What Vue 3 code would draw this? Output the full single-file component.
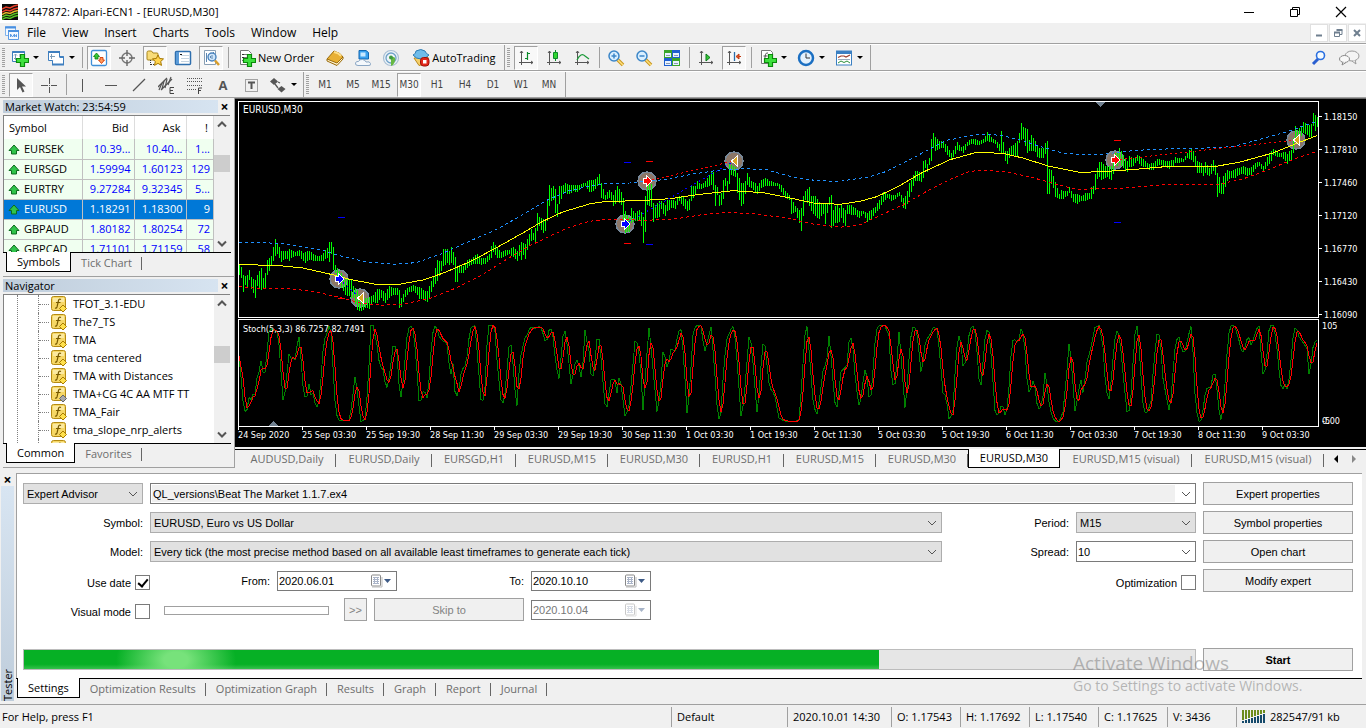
<template>
  <div class="terminal">
    <header class="title-bar">
      <svg class="app-logo" viewBox="0 0 16 16">
        <rect width="16" height="16" fill="#0a0a0a"/>
        <path d="M0 5l4-2 4 1 4-2 4-1M0 8l4-2 4 1 4-2 4-1" stroke="#e8402a" fill="none" stroke-width="1.4"/>
        <path d="M0 10.500l4-2 4 1 4-2 4-1" stroke="#e8b52a" fill="none" stroke-width="1.4"/>
        <path d="M0 13l4-2 4 1 4-2 4-1M0 15.500l4-2 4 1 4-2 4-1" stroke="#58c322" fill="none" stroke-width="1.4"/>
      </svg>
      <span class="title-text">1447872: Alpari-ECN1 - [EURUSD,M30]</span>
      <div class="window-buttons">
        <button v-for="name in ['minimize', 'restore', 'close']" :key="name" :aria-label="name">
          <svg viewBox="0 0 12 12" v-html="icons[name]"></svg>
        </button>
      </div>
    </header>

    <nav class="menu-bar">
      <svg class="menu-icon" viewBox="0 0 16 16" v-html="icons.mdi"></svg>
      <button v-for="item in menus" :key="item">{{ item }}</button>
      <div class="mdi-buttons">
        <button v-for="name in ['mdiMin', 'mdiRestore', 'mdiClose']" :key="name" :aria-label="name">
          <svg viewBox="0 0 12 12" v-html="icons[name]"></svg>
        </button>
      </div>
    </nav>

    <div class="toolbar">
      <div class="tool-group">
        <i class="grip"></i>
        <template v-for="(tool, index) in mainTools" :key="index">
          <i v-if="tool.sep" class="sep"></i>
          <button v-else class="tool" :class="{pressed: tool.on, drop: tool.drop, wide: tool.text}" :aria-label="tool.icon">
            <svg viewBox="0 0 18 18" v-html="icons[tool.icon]"></svg>
            <span v-if="tool.text">{{ tool.text }}</span>
            <i v-if="tool.drop" class="caret"></i>
          </button>
        </template>
      </div>
      <div class="tool-group charts">
        <i class="grip"></i>
        <template v-for="(tool, index) in chartTools" :key="index">
          <i v-if="tool.sep" class="sep"></i>
          <button v-else class="tool" :class="{pressed: tool.on, drop: tool.drop}" :aria-label="tool.icon">
            <svg viewBox="0 0 18 18" v-html="icons[tool.icon]"></svg>
            <i v-if="tool.drop" class="caret"></i>
          </button>
        </template>
      </div>
      <div class="tool-right">
        <button class="tool" aria-label="search"><svg viewBox="0 0 18 18" v-html="icons.search"></svg></button>
        <button class="tool chat" aria-label="chat"><svg viewBox="0 0 22 18" v-html="icons.chat"></svg></button>
      </div>
    </div>

    <div class="toolbar">
      <div class="tool-group">
        <i class="grip"></i>
        <template v-for="(tool, index) in drawTools" :key="index">
          <i v-if="tool.sep" class="sep"></i>
          <button v-else class="tool" :class="{pressed: tool.on, drop: tool.drop}" :aria-label="tool.icon">
            <span v-if="tool.letter" class="letter">{{ tool.letter }}</span>
            <svg v-else viewBox="0 0 18 18" v-html="icons[tool.icon]"></svg>
            <i v-if="tool.drop" class="caret"></i>
          </button>
        </template>
      </div>
      <div class="tool-group">
        <i class="grip"></i>
        <button v-for="tf in timeframes" :key="tf" class="tool timeframe" :class="{pressed: tf === 'M30'}">{{ tf }}</button>
      </div>
    </div>

    <main class="workspace">
      <aside class="side">
        <section class="dock">
          <div class="dock-title"><span>Market Watch: 23:54:59</span><button aria-label="Close">×</button></div>
          <div class="dock-body quotes">
            <table>
              <thead>
                <tr><th class="symbol">Symbol</th><th class="bid">Bid</th><th class="ask">Ask</th><th class="spread">!</th></tr>
              </thead>
              <tbody>
                <tr v-for="row in quotes" :key="row[0]" :class="{selected: row[0] === 'EURUSD'}">
                  <td class="symbol"><svg viewBox="0 0 12 12" v-html="icons.up"></svg>{{ row[0] }}</td>
                  <td>{{ row[1] }}</td>
                  <td>{{ row[2] }}</td>
                  <td>{{ row[3] }}</td>
                </tr>
              </tbody>
            </table>
            <div class="scroll">
              <svg viewBox="0 0 16 16"><path d="M4 10l4-4 4 4" /></svg>
              <i class="thumb watch-thumb"></i>
              <svg viewBox="0 0 16 16"><path d="M4 6l4 4 4-4" /></svg>
            </div>
          </div>
          <div class="dock-tabs"><button class="active">Symbols</button><button>Tick Chart</button></div>
        </section>

        <section class="dock">
          <div class="dock-title"><span>Navigator</span><button aria-label="Close">×</button></div>
          <div class="dock-body navigator">
            <ul>
              <li v-for="name in indicators" :key="name">
                <svg viewBox="0 0 16 16" :class="{gray: name.startsWith('TMA+')}" v-html="icons.indicator"></svg>{{ name }}
              </li>
            </ul>
            <div class="scroll">
              <svg viewBox="0 0 16 16"><path d="M4 10l4-4 4 4" /></svg>
              <i class="thumb nav-thumb"></i>
              <svg viewBox="0 0 16 16"><path d="M4 6l4 4 4-4" /></svg>
            </div>
          </div>
          <div class="dock-tabs"><button class="active">Common</button><button>Favorites</button></div>
        </section>
      </aside>

      <section class="chart-area">
        <div class="chart">
          <div class="pane-row">
            <div class="pane price-pane">
              <span class="pane-title">EURUSD,M30</span>
              <svg viewBox="3 4 1079 215" preserveAspectRatio="none">
                <path d="M860 4h9l-4.500 5z" fill="#708090"/>
                <g v-for="(m, i) in markers" :key="'c' + i">
                  <circle :cx="m.x" :cy="m.y" r="9" fill="#8c7768" stroke="#778899" stroke-width="1.500"/>
                </g>
                <path :d="barPath" class="bars"/>
                <path :d="upperBand" class="line blue dashed"/>
                <path :d="lowerBand" class="line red dashed"/>
                <path :d="middleBand" class="line yellow"/>
                <path d="M103 181L124 200M389 126L498 63" class="line trade-blue dotted"/>
                <path d="M411 83L498 63M879 62L1060 42" class="line red dotted"/>
                <path d="M102 119.500h7M388 64.500h7M410 146.500h7M878 124.500h7" class="line trade-blue"/>
                <path d="M102 200.500h7M410 63.500h7M388 145.500h7M878 42.500h7" class="line red"/>
                <g v-for="(m, i) in markers" :key="'m' + i" :transform="`translate(${m.x} ${m.y})`" class="marker">
                  <path v-if="m.color" d="M-3-2H0V-4L4 0 0 4V2H-3z" :fill="m.color"/>
                  <path v-else d="M3-4L-2 0 3 4z" fill="#daa520"/>
                </g>
              </svg>
            </div>
            <div class="axis price-axis"><span v-for="price in prices" :key="price">{{ price }}</span></div>
          </div>
          <div class="pane-row">
            <div class="pane stoch-pane">
              <span class="pane-title small">Stoch(5,3,3) 86.7257 82.7491</span>
              <svg viewBox="3 4 1079 106" preserveAspectRatio="none">
                <path d="M33 110h9l-4.500-5z" fill="#708090"/>
                <path :d="mainLine" class="line green"/>
                <path :d="signalLine" class="line red"/>
              </svg>
            </div>
            <div class="axis stoch-axis"><span>105</span><span class="levels"><b>0.00</b><b>-5</b></span></div>
          </div>
          <div class="time-axis"><span v-for="date in dates" :key="date">{{ date }}</span></div>
        </div>
        <nav class="chart-tabs">
          <button v-for="(tab, i) in chartTabs" :key="i" :class="{active: i === 8}" :style="{width: tab.width + 'px'}">{{ tab.name }}</button>
          <span class="tab-arrows"><i class="left"></i><i class="right"></i></span>
        </nav>
      </section>
    </main>

    <section class="tester">
      <div class="tester-strip"><button aria-label="Close">×</button><span>Tester</span></div>
      <div class="tester-main">
        <form class="settings" @submit.prevent>
          <div class="fields">
            <div class="row">
              <span class="combo w120"><select aria-label="Program type"><option>Expert Advisor</option></select><svg viewBox="0 0 10 6"><path d="M1 1l4 4 4-4"/></svg></span>
              <span class="combo white grow"><input v-model="expert" class="expert-name" aria-label="Expert"><svg viewBox="0 0 10 6"><path d="M1 1l4 4 4-4"/></svg></span>
            </div>
            <div class="row">
              <label class="w120" for="symbol">Symbol:</label>
              <span class="combo grow"><select id="symbol"><option>EURUSD, Euro vs US Dollar</option></select><svg viewBox="0 0 10 6"><path d="M1 1l4 4 4-4"/></svg></span>
              <label class="w120" for="period">Period:</label>
              <span class="combo w120"><select id="period"><option>M15</option></select><svg viewBox="0 0 10 6"><path d="M1 1l4 4 4-4"/></svg></span>
            </div>
            <div class="row">
              <label class="w120" for="model">Model:</label>
              <span class="combo grow"><select id="model"><option>Every tick (the most precise method based on all available least timeframes to generate each tick)</option></select><svg viewBox="0 0 10 6"><path d="M1 1l4 4 4-4"/></svg></span>
              <label class="w120" for="spread">Spread:</label>
              <span class="combo white w120"><input id="spread" v-model="spread"><svg viewBox="0 0 10 6"><path d="M1 1l4 4 4-4"/></svg></span>
            </div>
            <div class="row">
              <label class="check lead">Use date<input v-model="useDate" type="checkbox"></label>
              <label class="from" for="from">From:</label>
              <span class="date"><input id="from" v-model="from"><svg viewBox="0 0 22 14" v-html="icons.calendar"></svg></span>
              <label class="w120" for="to">To:</label>
              <span class="date"><input id="to" v-model="to"><svg viewBox="0 0 22 14" v-html="icons.calendar"></svg></span>
              <label class="check last">Optimization<input v-model="optimization" type="checkbox"></label>
            </div>
            <div class="row">
              <label class="check lead">Visual mode<input v-model="visual" type="checkbox"></label>
              <input class="speed" type="range" aria-label="Speed" disabled>
              <button class="push next" disabled>&gt;&gt;</button>
              <button class="push skip" disabled>Skip to</button>
              <span class="date off"><input v-model="skipTo" aria-label="Skip to date" disabled><svg viewBox="0 0 22 14" v-html="icons.calendar"></svg></span>
            </div>
            <div class="progress"><div class="progress-fill" :style="{width: progress + '%'}"></div></div>
          </div>
          <div class="actions">
            <button class="push">Expert properties</button>
            <button class="push">Symbol properties</button>
            <button class="push">Open chart</button>
            <button class="push">Modify expert</button>
            <button class="push start">Start</button>
          </div>
        </form>
        <nav class="tester-tabs">
          <button v-for="tab in testerTabs" :key="tab" :class="{active: tab === 'Settings'}">{{ tab }}</button>
        </nav>
      </div>
      <div class="watermark"><p>Activate Windows</p><p>Go to Settings to activate Windows.</p></div>
    </section>

    <footer class="status-bar">
      <span class="help">For Help, press F1</span>
      <span class="profile">Default</span>
      <span class="time">2020.10.01 14:30</span>
      <span>O: 1.17543</span>
      <span>H: 1.17692</span>
      <span>L: 1.17540</span>
      <span>C: 1.17625</span>
      <span>V: 3436</span>
      <span class="traffic"><svg viewBox="0 0 24 13" v-html="icons.traffic"></svg>282547/91 kb</span>
    </footer>
  </div>
</template>

<script setup>
import {ref} from 'vue';

const expert = ref('QL_versions\\Beat The Market 1.1.7.ex4');
const spread = ref('10');
const useDate = ref(true);
const visual = ref(false);
const optimization = ref(false);
const from = ref('2020.06.01');
const to = ref('2020.10.10');
const skipTo = ref('2020.10.04');
const progress = 73;

const menus = ['File', 'View', 'Insert', 'Charts', 'Tools', 'Window', 'Help'];

const mainTools = [
  {icon: 'newChart', drop: true},
  {icon: 'profiles', drop: true},
  {sep: true},
  {icon: 'watch', on: true},
  {icon: 'target'},
  {icon: 'folder', on: true},
  {icon: 'list'},
  {icon: 'testerIcon', on: true},
  {sep: true},
  {icon: 'order', text: 'New Order'},
  {icon: 'book'},
  {icon: 'server'},
  {icon: 'signal'},
  {icon: 'auto', text: 'AutoTrading'}
];

const chartTools = [
  {icon: 'barChart', on: true},
  {icon: 'candleChart'},
  {icon: 'lineChart'},
  {sep: true},
  {icon: 'zoomIn'},
  {icon: 'zoomOut'},
  {icon: 'tile'},
  {sep: true},
  {icon: 'autoScroll'},
  {icon: 'shift', on: true},
  {sep: true},
  {icon: 'addIndicator', drop: true},
  {icon: 'clock', drop: true},
  {icon: 'template', drop: true}
];

const drawTools = [
  {icon: 'pointer', on: true},
  {icon: 'cross'},
  {sep: true},
  {icon: 'vline'},
  {icon: 'hline'},
  {icon: 'trend'},
  {icon: 'channel'},
  {icon: 'fibo'},
  {icon: 'text', letter: 'A'},
  {icon: 'textLabel'},
  {icon: 'arrows', drop: true}
];

const timeframes = ['M1', 'M5', 'M15', 'M30', 'H1', 'H4', 'D1', 'W1', 'MN'];

const quotes = [
  ['EURSEK', '10.39...', '10.40...', '1...'],
  ['EURSGD', '1.59994', '1.60123', '129'],
  ['EURTRY', '9.27284', '9.32345', '5...'],
  ['EURUSD', '1.18291', '1.18300', '9'],
  ['GBPAUD', '1.80182', '1.80254', '72'],
  ['GBPCAD', '1.71101', '1.71159', '58']
];

const indicators = [
  'TFOT_3.1-EDU', 'The7_TS', 'TMA', 'tma centered', 'TMA with Distances',
  'TMA+CG 4C AA MTF TT', 'TMA_Fair', 'tma_slope_nrp_alerts', ''
];

const prices = ['1.18150', '1.17810', '1.17460', '1.17120', '1.16770', '1.16430', '1.16090'];

const dates = [
  '24 Sep 2020', '25 Sep 03:30', '25 Sep 19:30', '28 Sep 11:30', '29 Sep 03:30', '29 Sep 19:30',
  '30 Sep 11:30', '1 Oct 03:30', '1 Oct 19:30', '2 Oct 11:30', '5 Oct 03:30', '5 Oct 19:30',
  '6 Oct 11:30', '7 Oct 03:30', '7 Oct 19:30', '8 Oct 11:30', '9 Oct 03:30'
];

const chartTabs = [
  {name: 'AUDUSD,Daily', width: 98},
  {name: 'EURUSD,Daily', width: 96},
  {name: 'EURSGD,H1', width: 84},
  {name: 'EURUSD,M15', width: 92},
  {name: 'EURUSD,M30', width: 92},
  {name: 'EURUSD,H1', width: 84},
  {name: 'EURUSD,M15', width: 92},
  {name: 'EURUSD,M30', width: 92},
  {name: 'EURUSD,M30', width: 92},
  {name: 'EURUSD,M15 (visual)', width: 132},
  {name: 'EURUSD,M15 (visual)', width: 132}
];

const testerTabs = ['Settings', 'Optimization Results', 'Optimization Graph', 'Results', 'Graph', 'Report', 'Journal'];

// chart data is kept in segments: x offset, units per pixel, flat list of samples
const barSegments = [
  [0, 3, [
    10,500,530, 16,505,540, 22,530,582, 28,535,560, 34,530,570, 40,516,545, 46,538,572, 58,545,600, 64,530,565, 76,510,575, 82,540,570, 88,525,572, 94,485,532, 106,475,505,
    118,423,475, 124,435,468, 136,460,492, 142,458,485, 154,460,482, 160,452,488, 166,455,480, 178,462,475, 190,455,475, 202,465,490, 208,462,495, 214,458,488,
    226,462,485, 238,472,490, 250,475,490, 262,465,488, 274,450,480, 280,432,492, 286,430,465, 292,445,515, 298,500,525, 304,510,545, 316,525,570, 328,540,590,
    340,545,595, 346,545,600, 352,565,600, 364,575,635, 376,600,640, 388,600,630, 400,598,632, 412,590,612, 424,573,615, 436,575,600, 448,585,615,
    460,564,600, 472,570,590, 484,570,590, 490,575,630, 496,600,628, 508,575,598, 520,568,582, 532,560,580, 544,568,592, 550,568,602, 556,570,602,
    568,580,608, 574,580,612, 580,565,600, 592,535,568, 604,485,548, 616,490,520, 622,453,505, 634,453,495, 640,460,500, 646,445,495, 652,460,500, 658,475,553,
    664,505,552, 670,500,525, 682,505,525, 694,485,510, 706,482,500, 718,470,498, 724,468,498, 736,480,500, 748,480,498, 760,470,485, 766,445,482,
    772,432,462, 784,450,480, 796,462,480, 808,455,475, 820,455,468, 832,448,478, 844,460,488, 850,440,475, 856,432,485, 862,435,470, 868,438,485, 874,425,455,
    886,392,430, 892,405,425, 898,390,440, 904,345,400, 910,358,385, 922,362,405, 928,365,400, 934,308,370, 940,260,325, 946,270,308, 952,265,305, 958,270,345,
    964,320,358, 970,265,320, 982,262,288, 988,255,285, 1000,262,288, 1012,260,280, 1024,262,282, 1036,258,270, 1048,255,265, 1060,246,282, 1072,246,280,
    1084,238,265, 1090,228,260, 1096,255,300, 1108,290,305, 1120,275,300
  ]],
  [374, 3, [
    4,282,305, 10,290,325, 22,265,312, 34,280,320, 40,300,365, 46,340,405, 58,360,402, 64,330,375, 76,345,370, 88,335,370, 94,340,382, 100,360,435,
    106,295,405, 112,265,320, 118,240,325, 124,255,325, 130,315,372, 136,320,360, 148,310,358, 154,310,332, 160,315,348, 166,320,355, 172,305,340, 184,305,330, 196,308,332,
    208,295,310, 220,298,325, 232,310,338, 238,305,338, 244,262,310, 256,265,288, 262,250,272, 274,258,272, 286,250,268, 298,230,265, 304,220,260, 310,220,275, 316,262,325,
    322,265,290, 328,290,325, 334,285,320, 340,245,305, 346,240,262, 352,250,280, 358,198,260, 364,200,230, 376,205,235, 382,225,285, 394,255,325, 400,255,320, 406,250,290, 412,225,262, 424,250,270,
    436,255,282, 442,265,288, 454,245,270, 466,240,265, 478,248,265, 490,252,265, 502,255,265, 514,260,282, 526,280,298, 538,290,305, 544,300,348,
    556,325,342, 568,335,375, 574,330,402, 580,295,355, 586,280,305, 598,266,325, 604,295,340, 616,295,355, 628,312,362, 640,318,348, 646,315,380,
    652,320,345, 658,298,320, 664,290,390, 670,335,385, 676,325,375, 682,318,375, 688,330,372, 694,318,358, 700,330,375, 706,335,385, 712,322,348, 724,322,350, 736,330,352, 748,340,360, 760,340,348,
    772,345,372, 784,335,362, 796,328,345, 808,305,332, 820,283,312, 832,288,300, 844,290,308, 856,290,302, 868,282,292, 880,300,330, 886,295,332,
    892,280,318, 898,255,298, 904,245,282, 916,218,250, 928,222,250, 934,228,253, 940,188,240, 946,186,210, 952,198,222, 958,183,202, 964,124,190,
    970,105,150, 976,118,160, 988,130,152, 1000,130,150, 1012,145,172, 1024,165,182, 1036,145,170, 1042,132,155, 1054,148,160, 1060,145,165, 1072,132,145,
    1084,122,138, 1096,122,140, 1108,130,140, 1120,124,135
  ]],
  [750, 3, [
    4,102,130, 16,118,132, 28,125,138, 40,138,160, 46,97,165, 52,132,168, 58,160,190, 64,158,200, 70,150,180, 82,140,170, 94,130,178, 100,105,135,
    106,75,125, 112,88,122, 124,92,165, 130,125,158, 136,112,158, 148,130,160, 154,145,178, 160,150,180, 172,152,180, 178,135,165, 184,126,288, 190,212,288,
    196,214,258, 202,235,268, 208,250,298, 220,288,302, 226,275,304, 232,278,302, 244,280,295, 250,268,285, 262,288,312, 274,288,318, 286,295,308, 298,285,308, 310,285,302, 316,268,302, 322,265,288,
    328,228,278, 334,210,242, 340,192,238, 346,192,245, 358,205,240, 364,205,238, 376,205,245, 382,188,230, 388,165,195, 394,165,205, 400,150,195,
    412,170,210, 424,190,222, 430,175,208, 442,180,205, 454,172,188, 466,178,205, 478,190,208, 490,198,215, 502,195,215, 514,182,205, 526,185,200,
    538,188,205, 550,188,212, 562,185,205, 568,178,195, 580,180,195, 592,182,192, 604,165,180, 616,150,185, 622,160,190, 634,190,225, 646,195,225,
    652,205,235, 658,192,225, 670,210,235, 682,185,220, 688,200,230, 694,225,296, 700,235,285, 706,255,288, 712,235,290, 724,215,248, 736,220,240,
    748,212,240, 760,210,230, 772,205,228, 784,210,235, 796,208,230, 808,195,212, 820,192,205, 832,205,222, 844,178,205, 856,160,190, 862,152,172,
    874,162,178, 886,165,178, 898,162,190, 904,168,198, 910,160,190, 916,158,190, 922,120,165, 928,85,130, 934,95,130, 946,85,115, 952,72,105,
    964,80,112, 976,80,120, 982,45,85, 988,50,98, 994,58,88
  ]]
];

const middle = [
  [0, 3, [10,500, 120,502, 200,510, 290,530, 340,544, 415,558, 495,558, 560,546, 620,526, 700,492, 780,450, 860,405, 920,370, 980,342, 1060,318, 1110,310]],
  [374, 3, [0,310, 90,308, 180,302, 260,290, 370,278, 460,284, 540,300, 610,315, 690,319, 750,310, 800,296, 860,268, 940,222, 1020,185, 1100,163]],
  [750, 3, [0,163, 60,168, 110,180, 190,205, 280,223, 350,221, 450,214, 550,205, 690,205, 760,193, 860,165, 930,137, 992,113]]
];

const upper = [
  [0, 3, [10,433, 60,433, 140,437, 260,457, 310,473, 390,491, 470,499, 540,494, 620,466, 700,430, 780,395, 860,350, 930,308, 1000,278, 1080,260, 1115,257]],
  [374, 3, [0,256, 60,255, 160,245, 250,228, 330,216, 400,212, 470,215, 540,235, 620,248, 690,250, 780,236, 830,220, 900,185, 970,147, 1010,127, 1090,112]],
  [750, 3, [0,108, 50,113, 110,128, 160,145, 230,165, 310,171, 360,168, 420,160, 500,154, 640,151, 740,146, 800,130, 900,102, 992,70]]
];

const lower = [
  [0, 3, [10,566, 60,571, 160,572, 230,580, 310,598, 380,617, 440,622, 500,618, 580,602, 660,570, 740,530, 810,485, 880,444, 940,415, 1000,388, 1060,370, 1115,364]],
  [374, 3, [0,364, 110,367, 200,362, 270,351, 350,343, 430,347, 530,360, 610,378, 690,388, 750,380, 800,357, 880,320, 950,280, 1030,240, 1080,220, 1120,217]],
  [750, 3, [0,217, 60,222, 130,236, 200,256, 270,274, 400,271, 470,266, 550,259, 700,259, 770,243, 840,218, 900,193, 950,174, 992,160]]
];

const stochSegments = [
  [0, 2.8, [
    9,120, 22,286, 30,286, 38,235, 43,255, 51,220, 54,240, 62,150, 66,180, 72,112, 78,205, 92,50, 98,38, 118,50, 133,272, 150,98, 156,140, 162,118, 167,140, 174,50,
    178,70, 190,245, 200,240, 206,190, 212,260, 217,220, 222,270, 228,272, 235,245, 240,150, 246,75, 254,55, 261,28, 266,50, 278,270, 285,312, 318,314, 326,250, 334,175,
    342,250, 350,317, 362,308, 370,200, 378,28, 386,28, 392,85, 397,88, 402,155, 410,150, 415,190, 424,218, 432,160, 441,78, 448,98, 452,120, 458,235, 462,243, 468,195,
    480,50, 487,28, 495,35, 504,120, 514,280, 522,225, 528,235, 532,215, 536,260, 545,120, 553,35, 560,28, 570,65, 580,75, 590,78, 596,140, 602,175, 608,140, 614,240,
    622,238, 630,175, 638,150, 644,150, 652,70, 658,35, 670,28, 676,120, 687,265, 696,240, 704,60, 708,28, 724,28, 732,150, 744,272, 752,245, 765,85, 772,90, 780,210,
    788,280, 794,130, 802,105, 806,70, 814,60, 824,32, 838,38, 852,28, 862,60, 868,85, 878,35, 886,45, 896,150, 905,190, 914,75, 919,32, 926,75, 936,180, 940,230,
    945,155, 954,130, 962,155, 967,190, 973,125, 978,28, 984,90, 990,110, 996,205, 1004,150, 1012,55, 1018,75, 1030,230, 1036,292, 1044,235, 1052,178, 1058,200,
    1062,190, 1068,242, 1074,165, 1082,240, 1090,305, 1100,270, 1108,190, 1118,65, 1126,90, 1134,170, 1140,290, 1148,150, 1157,28, 1165,130, 1180,300, 1190,200,
    1197,85, 1202,130, 1208,160, 1218,100, 1230,105, 1236,60, 1245,30, 1254,130, 1264,312, 1272,190, 1280,50, 1288,28, 1302,30, 1312,110, 1320,75, 1330,32, 1338,130,
    1350,317, 1358,290, 1366,150, 1374,70, 1388,35, 1394,30, 1402,120, 1415,315, 1424,230, 1438,40, 1446,120, 1460,305, 1470,150, 1478,55, 1486,140, 1494,215,
    1508,235, 1520,305, 1534,315, 1564,317
  ]],
  [560, 2.75, [
    9,310, 16,200, 24,60, 30,28, 38,130, 48,270, 58,295, 66,240, 74,165, 84,140, 92,45, 98,150, 110,292, 116,250, 124,165, 140,150, 148,50, 156,90, 164,200, 175,280,
    184,200, 191,155, 198,200, 203,278, 210,190, 218,70, 224,30, 244,28, 256,60, 262,180, 268,212, 274,200, 278,130, 284,35, 290,140, 301,292, 310,140, 318,40, 325,28,
    334,60, 345,180, 354,90, 362,62, 368,60, 378,32, 388,40, 396,120, 404,230, 412,240, 422,317, 432,280, 440,120, 446,60, 452,60, 460,158, 468,130, 478,38, 490,28,
    498,110, 504,200, 510,208, 518,80, 524,42, 532,50, 540,170, 548,295, 556,300, 564,270, 572,275, 576,308, 584,250, 590,130, 598,62, 606,80, 614,70, 620,30, 628,75,
    636,200, 642,235, 654,185, 662,260, 670,285, 678,255, 686,155, 694,250, 704,302, 714,317, 724,317, 734,290, 744,180, 752,65, 758,150, 768,295, 776,230, 784,190,
    790,235, 800,140, 812,90, 822,35, 834,28, 844,90, 852,220, 862,252, 870,150, 880,40, 890,60, 900,180, 912,305, 920,260, 928,120, 934,28, 940,30, 946,140, 956,288,
    966,288, 976,260, 984,140, 994,42, 1002,70, 1008,180, 1018,240, 1028,295, 1036,180, 1044,75, 1054,62, 1060,100, 1068,115, 1074,85, 1086,28, 1092,110, 1098,250,
    1106,317, 1116,312, 1124,240, 1132,210, 1140,220, 1150,155, 1158,225, 1166,312, 1172,308, 1180,200, 1188,70, 1194,30, 1206,28, 1220,80, 1226,112, 1232,105,
    1244,55, 1250,90, 1258,70, 1266,40, 1274,28, 1280,130, 1286,193, 1294,130, 1302,28, 1314,28, 1324,110, 1332,205, 1340,220, 1346,200, 1352,225, 1360,150, 1366,70,
    1374,28, 1384,65, 1398,85, 1406,100, 1412,195, 1420,100, 1428,75, 1436,72
  ]]
];

// arrow colour, or none for the closing triangle
const markers = [
  {x: 103, y: 181, color: '#0000ff'},
  {x: 124, y: 200},
  {x: 389, y: 126, color: '#0000ff'},
  {x: 411, y: 83, color: '#ff0000'},
  {x: 498, y: 63},
  {x: 879, y: 62, color: '#ff0000'},
  {x: 1060, y: 42}
];

function flatten(segments, size) {
  const list = [];
  for (const [offset, scale, data] of segments) {
    for (let i = 0; i < data.length; i += size) {
      const point = [offset + data[i] / scale];
      for (let k = 1; k < size; k++) {
        point.push(data[i + k] / 3);
      }
      list.push(point);
    }
  }
  return list;
}

function valueAt(points, x, k) {
  let i = 1;
  while (i < points.length - 1 && points[i][0] < x) {
    i++;
  }
  const a = points[i - 1];
  const b = points[i];
  const t = Math.min(1, Math.max(0, (x - a[0]) / (b[0] - a[0])));
  return a[k] + (b[k] - a[k]) * t;
}

function toPath(points) {
  return points.map((p, i) => (i ? 'L' : 'M') + p[0].toFixed(1) + ' ' + p[1].toFixed(1)).join('');
}

function buildBars() {
  const points = flatten(barSegments, 3);
  let d = '';
  for (let x = 3; x < 1082; x += 2) {
    const high = Math.round(valueAt(points, x + 0.4, 1));
    const low = Math.round(valueAt(points, x + 0.4, 2));
    d += `M${x + 0.5} ${high}V${low}`;
  }
  return d;
}

const barPath = buildBars();
const middleBand = toPath(flatten(middle, 2));
const upperBand = toPath(flatten(upper, 2));
const lowerBand = toPath(flatten(lower, 2));

const stoch = [];
const stochPoints = flatten(stochSegments, 2);
for (let x = 3; x < 1082; x += 2) {
  stoch.push([x, valueAt(stochPoints, x, 1)]);
}
const signal = stoch.map((p, i) => {
  const part = stoch.slice(Math.max(0, i - 2), i + 1);
  return [p[0], part.reduce((sum, q) => sum + q[1], 0) / part.length];
});
const mainLine = toPath(stoch);
const signalLine = toPath(signal);

const axes = '<path d="M4.500 2v14M2 13.500h14M3 4l1.500-2L6 4M14 12l2 1.500-2 1.500" fill="none" stroke="#555"/>';
const plus = '<path d="M10 7h4v4h4v4h-4v4h-4v-4H6v-4h4z" transform="translate(-.5 -1.500)" fill="#3ee03e" stroke="#0b8a0b" stroke-width="1.200"/>';
const lens = '<path d="M10 10l6 6" stroke="#c8961e" stroke-width="3.500"/><path d="M10 10l6 6" stroke="#ffe07a" stroke-width="1.500"/><circle cx="7" cy="7" r="5" fill="#d9efff" stroke="#3c86c8" stroke-width="1.500"/>';

const icons = {
  minimize: '<path d="M1 6.500h10" stroke="#000"/>',
  restore: '<path d="M1.500 3.500h7v7h-7zM3.500 3V1.500h7v7H9" fill="none" stroke="#000"/>',
  close: '<path d="M1 1l10 10M11 1L1 11" stroke="#000" stroke-width="1.200"/>',
  mdi: '<path d="M1.500 1.500h10v9h-10z" fill="#f4f9ff" stroke="#7fb2ec"/><path d="M1 2.500h11" stroke="#4a90e0" stroke-width="2"/><path d="M4.500 5.500h10v9h-10z" fill="#f4f9ff" stroke="#5a9ae4"/><path d="M4 6h11" stroke="#4a90e0" stroke-width="2"/><path d="M6.500 12V9l2 3 2-3v3l2-2.500V12" stroke="#5a9ae4" fill="none"/>',
  mdiMin: '<path d="M3 8.500h6" stroke="#6f7f8f" stroke-width="2"/>',
  mdiRestore: '<path d="M2.500 5.500h5v4h-5zM5 3.500h5v4H8" fill="none" stroke="#6f7f8f"/><path d="M2 5.500h6M4.500 3h6" stroke="#6f7f8f" stroke-width="2"/>',
  mdiClose: '<path d="M3 3l6 6M9 3l-6 6" stroke="#6f7f8f" stroke-width="2"/>',
  up: '<path d="M6 1l5 5.500H8.500V10h-5V6.500H1z" fill="#2fc44a" stroke="#0c6b1e"/>',
  indicator: '<rect x=".5" y=".5" width="14" height="14" rx="2" fill="#f6d765" stroke="#b58a12"/><path d="M2 2h11v4H2z" fill="#fbe9a0"/><path d="M10 3.500q-2-1-2.500 1L6 11q-.5 1.500-2 1M5 6.500h4.500" stroke="#7a5b00" fill="none" stroke-width="1.200"/><path class="gem" d="M12 9l3.500 3.500L12 16l-3.500-3.500z" fill="#ffe04d" stroke="#a87c00"/>',
  newChart: '<path d="M1.500 2.500h12v10h-12z" fill="#fff" stroke="#3f7fbf"/><path d="M1.500 3h12" stroke="#3f7fbf" stroke-width="2"/><path d="M4.500 5v6M3 6.500l1.500-1.500L6 6.500M3 9.500h4M9 5v3" stroke="#7b9cb8" fill="none"/>' + plus,
  profiles: '<path d="M1.500 2.500h11v9h-11z" fill="#fff" stroke="#3f7fbf"/><path d="M1 3h12" stroke="#3f7fbf" stroke-width="2"/><path d="M4.500 5v5M3 7.500h5" stroke="#7b9cb8"/><path d="M5.500 11.500v4h11v-8h-3" fill="#fff" stroke="#3f7fbf"/><path d="M12.500 8h4M5 15.500h12" stroke="#3f7fbf" stroke-width="2"/>',
  watch: '<rect x="1.500" y="1.500" width="15" height="15" rx="1.500" fill="#fff" stroke="#3f8fd8" stroke-width="1.300"/><path d="M6.500 4l3 3.500H8v2.500H5V7.500H3.500z" fill="#35c735" stroke="#0c7d0c" stroke-width=".8"/><path d="M11.500 14.500l-3-3.500H10V8.500h3V11h1.500z" fill="#ff9a5c" stroke="#d23a08" stroke-width=".9"/>',
  target: '<circle cx="9" cy="9" r="5" fill="none" stroke="#777" stroke-width="1.400"/><path d="M9 1v6M9 11v6M1 9h6M11 9h6" stroke="#666" stroke-width="1.400"/>',
  folder: '<path d="M1 3.500q0-1.500 1.500-1.500h3l1.500 2h4q1 0 1 1V11H2q-1 0-1-1z" fill="#f8dc78" stroke="#a8851d"/><path d="M4.500 11v5M5 15.500h3" stroke="#333" stroke-dasharray="1 1"/><path d="M12 6l1.700 3.500 3.800.4-2.800 2.600.8 3.900-3.500-2-3.500 2 .8-3.900L6.500 9.900l3.800-.4z" fill="#ffd34d" stroke="#a67700"/>',
  list: '<rect x="1.500" y="2.500" width="15" height="13" rx="1" fill="#fff" stroke="#2f6fae" stroke-width="1.500"/><path d="M2 3h3v12H2z" fill="#5b9bd8"/><path d="M7 6.500h8M7 9.500h8M7 12.500h8" stroke="#c4d3e0"/><path d="M6 5.500h2" stroke="#111"/>',
  testerIcon: '<path d="M2.500 1.500h11v14h-11z" fill="#fff" stroke="#8aa0b5"/><path d="M4.500 4v9M6.500 5v6M11.500 3v4" stroke="#5c87b2"/><circle cx="10" cy="8" r="4" fill="#cfe6fb" stroke="#4b84bd" stroke-width="1.400"/><path d="M10 6v4M8.500 7v2" stroke="#5c87b2"/><path d="M13 11.500l4 4.500" stroke="#d79d2c" stroke-width="2.500"/>',
  order: '<path d="M2.500 1.500h8l3 3v11h-11z" fill="#fff" stroke="#777"/><path d="M4 5.500h7M4 8.500h6M4 11.500h4" stroke="#777"/><path d="M4 5.500h2M4 8.500h2" stroke="#333"/>' + plus,
  book: '<path d="M1 10l7-8q7 2 9 6l-6 8Q5 14 1 10z" fill="#e8b035" stroke="#9b6c0c"/><path d="M1 10l10 4 6-6v2l-6 6.500L1 12z" fill="#fff3cf" stroke="#9b6c0c"/><path d="M8 3q5 1 7 4" stroke="#ffe08a" fill="none" stroke-width="2"/>',
  server: '<path d="M5 1.500h7l2.500 2V10H5z" fill="#3aa0ee" stroke="#1167b2"/><path d="M6.500 3.500h5v4h-5z" fill="#c9e8ff"/><path d="M4 16.500q-3 0-2.500-2.500Q2 12 4.500 12.500q1-2.500 4-2t3.500 2.500q4-1 4.500 1.500t-2.500 2z" fill="#f4f8fc" stroke="#8aa6c4"/>',
  signal: '<circle cx="9" cy="9" r="7.500" fill="#eef4f8" stroke="#a9bfd4" stroke-width="1.200"/><circle cx="9" cy="9" r="5" fill="none" stroke="#6ea0c8" stroke-width="1.300"/><path d="M9 17V9q3-2 4 0t-2 7z" fill="#67b944"/><circle cx="9" cy="8.500" r="2" fill="#3d9a3f"/>',
  auto: '<path d="M2 9l5 7.500 7-2L16 8z" fill="#f5cf68" stroke="#b98a1f"/><path d="M1 6q3-1 3-4 5-3 9 0 1 3 4 4-3 4-8 4T1 6z" fill="#6fbcea" stroke="#2c7cb4"/><rect x="8.500" y="8.500" width="8.500" height="8.500" rx="3" fill="#e3281c" stroke="#9e1008"/><path d="M11 11h3.500v3.500H11z" fill="#fff"/>',
  barChart: axes + '<path d="M10.500 3v8M8 9.500h2.500M10.500 4.500H13" stroke="#0a8a2a" stroke-width="1.200"/>',
  candleChart: axes + '<path d="M10.500 1v11" stroke="#0a8a2a"/><path d="M8.500 3.500h4v6h-4z" fill="#2fd62f" stroke="#0a8a2a"/>',
  lineChart: axes + '<path d="M4 11q4-8 8-4l4 3" fill="none" stroke="#1c9a3a" stroke-width="1.200"/>',
  zoomIn: lens + '<path d="M4.500 7h5M7 4.500v5" stroke="#3c86c8" stroke-width="1.500"/>',
  zoomOut: lens + '<path d="M4.500 7h5" stroke="#3c86c8" stroke-width="1.500"/>',
  tile: '<path d="M1 1h8v8H1z" fill="#3aa52a"/><path d="M9 1h8v8H9z" fill="#1f5fd0"/><path d="M1 9h8v8H1z" fill="#1f5fd0"/><path d="M9 9h8v8H9z" fill="#3aa52a"/><path d="M2 4h6v4H2zM10 4h6v4h-6zM2 12h6v4H2zM10 12h6v4h-6z" fill="#e8f2ff"/><path d="M3 6.500h4M11 6.500h4M3 14.500h4M11 14.500h4" stroke="#8a9ab0"/>',
  autoScroll: axes + '<path d="M9 5l4 3.500L9 12z" fill="#35c735" stroke="#0a7a1a"/>',
  shift: axes + '<path d="M9.500 3v9" stroke="#2a6ca8" stroke-width="1.300"/><path d="M11 7.500l3-2.500v5zM14 7.500h2" fill="#e0562a" stroke="#c2380e"/>',
  addIndicator: '<path d="M2.500 1.500h9l2 2v11h-11z" fill="#fff" stroke="#777"/><path d="M9 4q-2-.5-2.500 1.500L5.500 11M4.500 7h4" stroke="#555" fill="none"/>' + plus,
  clock: '<circle cx="9" cy="9" r="7" fill="#e4f1fd" stroke="#1b6fc2" stroke-width="2.500"/><path d="M9 4.500V9h4" stroke="#333" fill="none"/>',
  template: '<rect x="1.500" y="2" width="15" height="14" fill="#fff" stroke="#3a7fc2"/><path d="M1 3.500h16" stroke="#3a7fc2" stroke-width="3"/><path d="M3 8.500l3-1.500h3l2 1 4-2" stroke="#9a3b2a" fill="none" stroke-width="1.200"/><path d="M3 10.500h12" stroke="#9ab"/><path d="M3 14l3-2 3 1.500 3-1.500 3 2" stroke="#2c8f3a" fill="none"/>',
  search: '<path d="M8 10l-5 5" stroke="#2a5fd0" stroke-width="3"/><circle cx="10.500" cy="6.500" r="4" fill="#f5fbff" stroke="#2a6fe0" stroke-width="1.600"/>',
  chat: '<ellipse cx="14" cy="7" rx="7" ry="5" fill="#f4f4f4" stroke="#999"/><path d="M17 11l1 4-4-3" fill="#f4f4f4" stroke="#999"/><ellipse cx="6.500" cy="10" rx="5" ry="3.500" fill="#f8f8f8" stroke="#888"/><path d="M5 13l-1 3 4-2.500" fill="#f8f8f8" stroke="#888"/>',
  pointer: '<path d="M5 2v12l3-3 2.500 5.500 2-1L10 10.500h4z" fill="#555"/>',
  cross: '<path d="M9.500 2v6M9.500 11v6M1 9.500h7M11 9.500h6" stroke="#555"/><path d="M9 9h1v1H9z" fill="#555"/>',
  vline: '<path d="M8.500 3v13" stroke="#555"/>',
  hline: '<path d="M3 9.500h12" stroke="#555"/>',
  trend: '<path d="M3 15L15 3" stroke="#555" stroke-width="1.300"/>',
  channel: '<path d="M0 11L9 2M3 14L14 3" stroke="#555" stroke-width="1.300" fill="none"/><path d="M4 13l2-8M7 12l2-9M10 9l3-8M1 14l3-7" stroke="#555" stroke-width="1.200" fill="none"/><path d="M16 11.500h-4v6h4M12 14.500h3" stroke="#444" fill="none"/>',
  fibo: '<path d="M1 2.500h15M1 5.500h15M1 9.500h15M1 13.500h9" stroke="#555" stroke-dasharray="1 1"/><path d="M12.500 18v-6H16M12.500 14.500H15" stroke="#444" fill="none"/>',
  textLabel: '<rect x="3.500" y="3.500" width="12" height="12" fill="none" stroke="#555" stroke-dasharray="1 1"/><path d="M6 6.500h7M9.500 6v7" stroke="#555" stroke-width="2"/>',
  arrows: '<path d="M5 2l4 3.500L5 9 1 5.500z" fill="#555"/><path d="M12.500 10l4 3-4 3.500-4-3.500z" fill="#555"/><path d="M6 8l3 4M9 6l2 1" stroke="#555" stroke-width="1.300"/>',
  calendar: '<rect x="1.500" y="1" width="9" height="11" rx="1" fill="#fff" stroke="#888"/><path d="M3 3.500h6M3 5.500h6M3 7.500h6M3 9.500h6M4.500 3v7M7.500 3v7" stroke="#aab4c8"/><path d="M2 13h10V3" fill="none" stroke="#bbb"/><path d="M14 5h7l-3.500 4z" fill="#3d5a86"/>',
  traffic: [0, 3, 6, 9, 12, 15, 18, 21].map((x, i) => `<path d="M${x + 1} 0v${10 - i}" stroke="#6d8d1c" stroke-width="2"/><path d="M${x + 1} ${11 - i}V13" stroke="#154a6b" stroke-width="2"/>`).join('')
};
</script>

<style>
body {
  background: #f0f0f0;
}
</style>

<style scoped>
* {
  box-sizing: border-box;
}

.terminal {
  font-family: "Open Sans", "Noto Sans", sans-serif;
  font-size: 11px;
  line-height: 16px;
  color: #000;
  background: #f0f0f0;
}

button {
  font: inherit;
  color: inherit;
  background: none;
  border: 0;
  padding: 0;
  white-space: nowrap;
}

svg {
  display: block;
  flex: none;
}

.title-bar {
  display: flex;
  align-items: center;
  height: 23px;
  padding-left: 2px;
  background: #fff;
}

.app-logo {
  width: 16px;
  height: 16px;
}

.title-text {
  margin-left: 5px;
}

.window-buttons {
  display: flex;
  margin-left: auto;
  padding-right: 2px;
}

.window-buttons button {
  width: 46px;
  display: flex;
  justify-content: center;
}

.window-buttons svg,
.mdi-buttons svg {
  width: 12px;
  height: 12px;
}

.menu-bar {
  display: flex;
  align-items: center;
  height: 21px;
  padding-left: 4px;
  border-bottom: 1px solid #a0a0a0;
  font-size: 12px;
}

.menu-icon {
  width: 16px;
  height: 16px;
  margin-right: 2px;
}

.menu-bar > button {
  padding: 0 5px;
  margin-right: 6px;
}

.mdi-buttons {
  display: flex;
  gap: 1px;
  margin-left: auto;
}

.mdi-buttons button {
  width: 18px;
  height: 18px;
  display: flex;
  align-items: center;
  justify-content: center;
  background: #fff;
  border: 1px solid #e0e0e0;
}

.toolbar {
  display: flex;
  height: 27px;
  border-top: 1px solid #fff;
  border-bottom: 1px solid #a0a0a0;
}

.tool-group {
  display: flex;
  align-items: center;
  padding-right: 2px;
  border-right: 1px solid #a0a0a0;
}

.grip {
  width: 3px;
  height: 19px;
  margin: 0 2px;
  background: repeating-linear-gradient(#a0a0a0 0 1px, #f0f0f0 1px 2px);
}

.sep {
  width: 1px;
  height: 21px;
  margin: 0 2px 0 3px;
  background: #a0a0a0;
}

.tool {
  display: flex;
  align-items: center;
  justify-content: center;
  width: 24px;
  height: 24px;
  margin: 0 2px;
  border: 1px solid transparent;
}

.tool svg {
  width: 18px;
  height: 18px;
}

.tool.drop {
  width: 34px;
  margin: 0 1px;
  gap: 4px;
}

.charts .tool.drop {
  margin: 0 2px;
}

.tool.wide {
  width: auto;
  padding: 0 4px;
  gap: 2px;
}

.tool.pressed {
  background: #f8f8f8;
  border-color: #a0a0a0 #fff #fff #a0a0a0;
}

.tool.timeframe {
  font-family: "DejaVu Sans Condensed", "Open Sans", sans-serif;
  font-size: 10px;
  color: #444;
}

.letter {
  font: bold 13px/16px "Open Sans", sans-serif;
  color: #555;
}

.caret {
  border: 3px solid transparent;
  border-top-color: #000;
  border-bottom: 0;
}

.tool-right {
  display: flex;
  align-items: center;
  margin-left: auto;
  padding-right: 2px;
}

.tool-right .tool {
  margin: 0 3px;
}

.tool.chat svg {
  width: 22px;
}

.workspace {
  display: flex;
}

.side {
  flex: none;
  width: 235px;
  padding-left: 3px;
}

.dock {
  padding: 2px 3px 4px 0;
  border-bottom: 1px solid #a0a0a0;
  border-right: 1px solid #a0a0a0;
}

.dock-title {
  display: flex;
  align-items: center;
  justify-content: space-between;
  height: 13px;
  margin-bottom: 2px;
  padding-left: 2px;
  background: linear-gradient(90deg, #bfcddb, #d8e5f2);
}

.dock-title button,
.tester-strip button {
  width: 13px;
  height: 13px;
  background: #f0f0f0;
  font-size: 14px;
  font-weight: 700;
  line-height: 11px;
}

.dock-body {
  display: flex;
  justify-content: space-between;
  overflow: hidden;
  margin-right: 1px;
  background: #fff;
  border-top: 1px solid #828282;
  border-left: 1px solid #828282;
}

.quotes {
  height: 137px;
}

.navigator {
  height: 149px;
}

.quotes table {
  width: 210px;
  table-layout: fixed;
  border-collapse: collapse;
}

.quotes th {
  height: 23px;
  font-weight: 400;
  text-align: right;
  padding: 0 5px;
  border-right: 1px solid #ddd;
}

.quotes td {
  height: 20px;
  padding: 0 3px;
  text-align: right;
  color: #0000ff;
  white-space: nowrap;
  background: #f0fff0;
  border-right: 1px solid #c0c0c0;
  border-bottom: 1px solid #c0c0c0;
  line-height: 14px;
}

.quotes th.symbol,
.quotes td.symbol {
  text-align: left;
  color: #000;
}

.quotes th.symbol {
  width: 78px;
}

.quotes td.symbol svg {
  display: inline-block;
  width: 12px;
  height: 12px;
  margin: 0 4px 0 1px;
  vertical-align: -3px;
}

.quotes .bid,
.quotes .ask {
  width: 52px;
}

.quotes .selected td,
.quotes .selected td.symbol {
  background: #0078d7;
  color: #fff;
}

.scroll {
  display: flex;
  flex-direction: column;
  width: 16px;
  background: #f0f0f0;
}

.scroll svg {
  width: 16px;
  height: 17px;
}

.scroll svg:last-child {
  margin-top: auto;
}

.scroll path {
  fill: none;
  stroke: #555;
  stroke-width: 2;
}

.thumb {
  height: 17px;
  background: #cdcdcd;
}

.watch-thumb {
  margin-top: 22px;
}

.nav-thumb {
  margin-top: 34px;
}

.navigator ul {
  flex: 1;
  margin: 0 0 0 13px;
  padding: 0 0 0 20px;
  list-style: none;
  border-left: 1px dotted #808080;
}

.navigator li {
  display: flex;
  align-items: center;
  height: 18px;
  border-left: 1px dotted #808080;
  white-space: pre;
}

.navigator li::before {
  content: "";
  width: 10px;
  margin-right: 2px;
  border-top: 1px dotted #808080;
}

.navigator li svg {
  width: 16px;
  height: 16px;
  margin-right: 6px;
}

.gray :deep(.gem) {
  fill: #aaa;
  stroke: #666;
}

.dock-tabs,
.tester-tabs,
.chart-tabs {
  display: flex;
  border-top: 1px solid #000;
  color: #6d6d6d;
}

.dock-tabs {
  padding-left: 3px;
}

.dock-tabs button {
  position: relative;
  height: 19px;
  padding: 0 10px;
}

.dock-tabs button:not(.active)::after,
.tester-tabs button:not(.active)::after,
.chart-tabs button:not(.active)::after {
  content: "";
  position: absolute;
  top: 4px;
  right: 0;
  width: 1px;
  height: 13px;
  background: #666;
}

.dock-tabs .active,
.tester-tabs .active,
.chart-tabs .active {
  margin-top: -1px;
  color: #000;
  background: #fff;
  border: 1px solid #000;
  border-top: 0;
}

.dock-tabs .active {
  height: 20px;
}

.chart-area {
  flex: 1;
  min-width: 0;
  border-top: 1px solid #696969;
}

.chart {
  height: 348px;
  padding: 2px 0 0 3px;
  background: #000;
  color: #fff;
  font-family: "DejaVu Sans Condensed", "Open Sans", sans-serif;
  font-size: 9px;
  line-height: 11px;
}

.pane-row {
  display: flex;
  margin-bottom: 1px;
}

.pane {
  position: relative;
  flex: 1;
  min-width: 0;
  border: 1px solid #fff;
}

.price-pane {
  height: 217px;
}

.stoch-pane {
  height: 108px;
}

.pane > svg {
  width: 100%;
  height: 100%;
  shape-rendering: crispEdges;
}

.pane-title {
  position: absolute;
  left: 4px;
  top: 2px;
  font-size: 10px;
  line-height: 12px;
}

.pane-title.small {
  top: 3px;
  font-size: 9px;
}

.bars {
  stroke: #00ff00;
}

.marker path {
  stroke: #fff;
  stroke-width: 2;
  paint-order: stroke;
}

.line {
  fill: none;
  stroke-width: 1;
}

.blue {
  stroke: #1e90ff;
}

.trade-blue {
  stroke: #0000ff;
}

.red {
  stroke: #ff0000;
}

.yellow {
  stroke: #ffff00;
}

.green {
  stroke: #008000;
}

.dashed {
  stroke-dasharray: 3 3;
}

.dotted {
  stroke-dasharray: 2 3;
}

.axis {
  display: flex;
  flex-direction: column;
  width: 47px;
}

.price-axis {
  justify-content: space-between;
  padding: 11px 0 0;
  margin-bottom: -3px;
}

.price-axis span::before {
  content: "";
  display: inline-block;
  width: 3px;
  height: 1px;
  margin-right: 2px;
  vertical-align: 3px;
  background: #fff;
}

.stoch-axis {
  justify-content: space-between;
  padding: 2px 0 0 3px;
}

.levels {
  display: grid;
}

.levels b {
  grid-area: 1 / 1;
  font-weight: 400;
}

.time-axis {
  display: flex;
  overflow: hidden;
  margin-top: -1px;
}

.time-axis span {
  flex: 0 0 64px;
  white-space: nowrap;
}

.time-axis span::before {
  content: "";
  display: block;
  width: 1px;
  height: 3px;
  background: #fff;
}

.chart-tabs {
  height: 21px;
  margin-top: 2px;
  padding-left: 3px;
}

.chart-tabs button {
  position: relative;
  flex: none;
  height: 18px;
}

.chart-tabs .active {
  height: 19px;
}

.tab-arrows {
  display: flex;
  align-items: center;
  gap: 14px;
  height: 18px;
  margin: 0 auto;
}

.tab-arrows i {
  border: 4px solid transparent;
}

.tab-arrows .left {
  border-right-color: #000;
  border-left: 0;
}

.tab-arrows .right {
  border-left-color: #888;
  border-right: 0;
}

.tester {
  position: relative;
  display: flex;
  padding: 3px 4px 3px 0;
  border-bottom: 1px solid #a0a0a0;
}

.tester-strip {
  flex: none;
  display: flex;
  flex-direction: column;
  width: 14px;
  padding-left: 1px;
  margin-right: 2px;
}

.tester-strip span {
  flex: 1;
  writing-mode: vertical-rl;
  transform: rotate(180deg);
  line-height: 13px;
  background: linear-gradient(#bfcddb, #d8e5f2);
}

.tester-main {
  flex: 1;
  min-width: 0;
}

.settings {
  display: flex;
  gap: 7px;
  padding: 8px 9px 7px 6px;
  background: #fff;
  border-top: 1px solid #a0a0a0;
  border-left: 1px solid #a0a0a0;
  font: 11px/16px "Liberation Sans", Arial, sans-serif;
}

.fields {
  flex: 1;
  min-width: 0;
}

.row {
  display: flex;
  align-items: center;
  gap: 7px;
  height: 23px;
  margin-bottom: 6px;
}

.row label {
  text-align: right;
}

.row .w120 {
  flex: 0 0 120px;
}

.row .grow {
  flex: 1;
}

.row .from {
  width: 113px;
}

.combo {
  display: flex;
  align-items: center;
  min-width: 0;
  height: 21px;
  background: #e1e1e1;
  border: 1px solid #adadad;
  padding-right: 4px;
}

.combo.white {
  background: #fff;
  border-color: #7a7a7a;
}

.combo select,
.combo input,
.date input {
  flex: 1;
  width: 0;
  min-width: 0;
  height: 17px;
  margin: 0;
  padding: 0 3px;
  appearance: none;
  border: 0;
  outline: 0;
  background: none;
  font: inherit;
  color: inherit;
}

.combo input,
.date input {
  padding: 0 1px;
}

.combo .expert-name {
  margin: 0 6px 0 1px;
  background: #f0f0f0;
}

.combo svg {
  width: 10px;
  height: 6px;
}

.combo path {
  fill: none;
  stroke: #555;
}

.date {
  display: flex;
  align-items: center;
  flex: none;
  width: 120px;
  height: 20px;
  background: #fff;
  border: 1px solid #7a7a7a;
  padding-right: 4px;
}

.date svg {
  width: 22px;
  height: 14px;
}

.date.off {
  color: #777;
}

.date.off svg {
  opacity: 0.45;
}

.check {
  display: flex;
  align-items: center;
  justify-content: flex-end;
  gap: 4px;
  padding-top: 4px;
}

.check.lead {
  width: 127px;
}

.check.last {
  margin-left: auto;
}

.check input {
  appearance: none;
  width: 15px;
  height: 15px;
  margin: 0;
  border: 1px solid #7a7a7a;
  background: #fff;
}

.check input:checked::before {
  content: "";
  display: block;
  width: 8px;
  height: 4px;
  margin: 3px 0 0 2px;
  border-left: 2px solid #000;
  border-bottom: 2px solid #000;
  transform: rotate(-50deg);
}

.speed {
  appearance: none;
  width: 165px;
  height: 9px;
  margin: 1px 8px 0 7px;
  background: #fff;
  border: 1px solid #a0a0a0;
}

.speed::-webkit-slider-thumb {
  appearance: none;
}

.push {
  height: 23px;
  background: #f0f0f0;
  border: 1px solid #a0a0a0;
}

.push:disabled {
  color: #838383;
}

.next {
  width: 23px;
}

.skip {
  width: 150px;
}

.actions {
  display: flex;
  flex-direction: column;
  gap: 6px;
  width: 150px;
}

.actions .start {
  margin-top: auto;
  font-weight: 700;
}

.progress {
  height: 21px;
  margin: 28px 0 1px;
  background: #e6e6e6;
  border: 1px solid #bcbcbc;
}

.progress-fill {
  height: 100%;
  background:
    radial-gradient(ellipse 60px 40px at 152px 10px, #77e27b 20%, transparent),
    linear-gradient(#06b025 75%, #35c14c);
}

.tester-tabs {
  height: 23px;
  padding-left: 1px;
}

.tester-tabs button {
  position: relative;
  height: 20px;
  padding: 0 10px;
}

.watermark {
  position: absolute;
  right: 0;
  bottom: 9px;
  width: 293px;
  color: rgba(120, 120, 120, 0.5);
  pointer-events: none;
}

.watermark p {
  margin: 0;
  font-size: 14px;
  line-height: 18px;
}

.watermark p:first-child {
  font-size: 19px;
  line-height: 28px;
}

.status-bar {
  display: flex;
  align-items: center;
  height: 23px;
  padding-left: 2px;
}

.status-bar span {
  flex: 0 0 69px;
  padding-left: 5px;
  border-left: 1px solid #a0a0a0;
  line-height: 20px;
  white-space: nowrap;
}

.status-bar .help {
  flex: 1;
  padding: 0;
  border: 0;
}

.status-bar .profile {
  flex-basis: 116px;
}

.status-bar .time {
  flex-basis: 104px;
}

.status-bar .traffic {
  display: flex;
  align-items: center;
  gap: 4px;
  flex-basis: 130px;
}

.traffic svg {
  width: 24px;
  height: 13px;
}
</style>
